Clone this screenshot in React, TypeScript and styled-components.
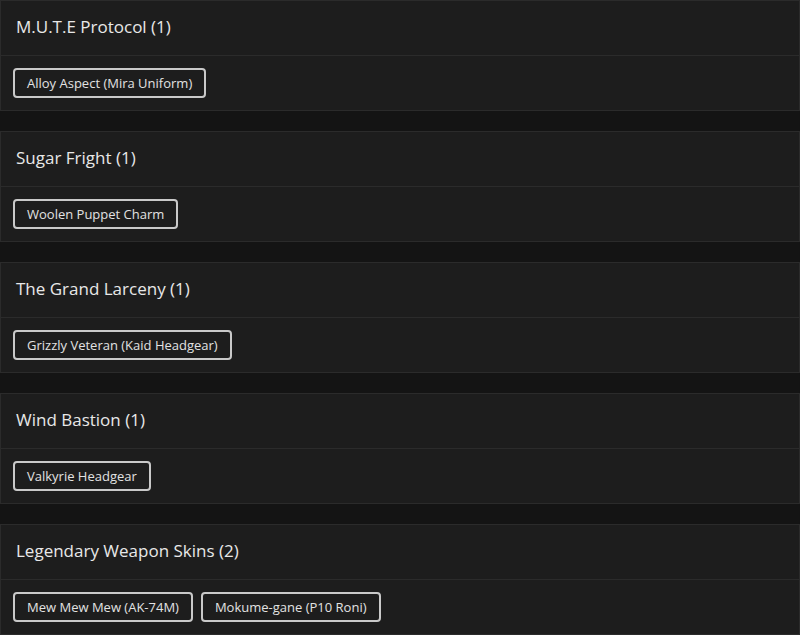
import React from "react";
import styled, { createGlobalStyle } from "styled-components";

const Global = createGlobalStyle`
  html, body { margin: 0; padding: 0; background: #141414; }
  body { font-family: "Open Sans", "Noto Sans", sans-serif; }
`;

const List = styled.div`
  display: flex;
  flex-direction: column;
  gap: 20px;
`;

const Card = styled.section`
  background: #1d1d1d;
  border: 1px solid #2b2b2b;
`;

const Header = styled.div`
  box-sizing: border-box;
  height: 55px;
  display: flex;
  align-items: center;
  padding: 0 15px 3px;
  border-bottom: 1px solid #2b2b2b;
`;

const Title = styled.h2`
  margin: 0;
  font-size: 17px;
  line-height: 20px;
  font-weight: 500;
  color: #e8e8e8;
`;

const Body = styled.div`
  box-sizing: border-box;
  height: 54px;
  display: flex;
  align-items: center;
  gap: 8px;
  padding: 0 12px;
`;

const Chip = styled.span`
  box-sizing: border-box;
  height: 30px;
  display: inline-flex;
  align-items: center;
  padding: 0 12px 1px;
  border: 2px solid #c9c9c9;
  border-radius: 4px;
  font-size: 13px;
  color: #e2e2e2;
  white-space: nowrap;
`;

const data: { title: string; items: string[] }[] = [
  { title: "M.U.T.E Protocol", items: ["Alloy Aspect (Mira Uniform)"] },
  { title: "Sugar Fright", items: ["Woolen Puppet Charm"] },
  { title: "The Grand Larceny", items: ["Grizzly Veteran (Kaid Headgear)"] },
  { title: "Wind Bastion", items: ["Valkyrie Headgear"] },
  { title: "Legendary Weapon Skins", items: ["Mew Mew Mew (AK-74M)", "Mokume-gane (P10 Roni)"] },
];

export default function App() {
  return (
    <>
      <Global />
      <List>
        {data.map((g) => (
          <Card key={g.title}>
            <Header>
              <Title>
                {g.title} ({g.items.length})
              </Title>
            </Header>
            <Body>
              {g.items.map((it) => (
                <Chip key={it}>{it}</Chip>
              ))}
            </Body>
          </Card>
        ))}
      </List>
    </>
  );
}
